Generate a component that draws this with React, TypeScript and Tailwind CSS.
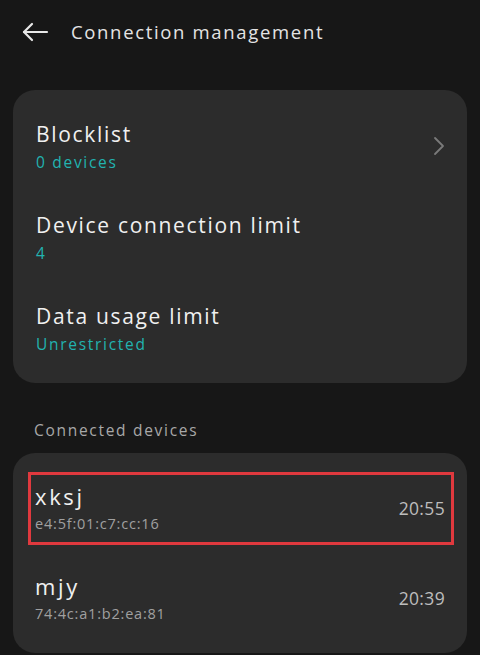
import React from 'react';

const font = { fontFamily: '"Open Sans", "Liberation Sans", sans-serif' };

const settings = [
  { title: 'Blocklist', value: '0 devices', chevron: true },
  { title: 'Device connection limit', value: '4', chevron: false },
  { title: 'Data usage limit', value: 'Unrestricted', chevron: false },
];

const devices = [
  { name: 'xksj', mac: 'e4:5f:01:c7:cc:16', time: '20:55', marked: true },
  { name: 'mjy', mac: '74:4c:a1:b2:ea:81', time: '20:39', marked: false },
];

export default function App() {
  return (
    <div className="w-[480px] h-[655px] overflow-hidden bg-[#171717] text-[#ececec]" style={font}>
      {/* header */}
      <div className="h-[64px] flex items-center pl-[21px]">
        <svg width="28" height="20" viewBox="0 0 28 20" fill="none" stroke="#e8e8e8" strokeWidth="2.2" strokeLinecap="round" strokeLinejoin="round">
          <path d="M26 10H3" />
          <path d="M11 2L3 10l8 8" />
        </svg>
        <h1 className="ml-[22px] text-[18.5px] tracking-[0.09em] text-[#e4e4e4]">Connection management</h1>
      </div>

      <div className="mx-[13px] mt-[26px] rounded-[22px] bg-[#2c2c2c] py-[10px]">
        {settings.map((s) => (
          <div key={s.title} className="h-[91px] flex items-center pl-[23px] pr-[22px]">
            <div className="flex-1">
              <div className="text-[21px] leading-[28px] tracking-[0.08em] text-[#f0f0f0]">{s.title}</div>
              <div className="mt-[4px] text-[15.5px] leading-[20px] tracking-[0.11em] text-[#22b3b0]">{s.value}</div>
            </div>
            {s.chevron && (
              <svg width="12" height="20" viewBox="0 0 12 20" fill="none" stroke="#7a7a7a" strokeWidth="1.8" strokeLinecap="round" strokeLinejoin="round">
                <path d="M2 2l8 8-8 8" />
              </svg>
            )}
          </div>
        ))}
      </div>

      <div className="pl-[34px] pt-[37px] pb-[13px] text-[15.5px] leading-[20px] tracking-[0.11em] text-[#a8a8a8]">Connected devices</div>

      <div className="mx-[13px] rounded-[22px] bg-[#2c2c2c] pt-[10px] pb-[10px]">
        {devices.map((d) => (
          <div key={d.mac} className="relative h-[90px] flex items-center pl-[22px] pr-[22px]">
            <div className="flex-1">
              <div className="text-[22px] leading-[28px] tracking-[0.12em] text-[#f0f0f0]">{d.name}</div>
              <div className="mt-[4px] text-[14.5px] leading-[20px] tracking-[0.055em] text-[#a0a0a0]">{d.mac}</div>
            </div>
            <div className="text-[17.5px] tracking-[0.02em] text-[#bdbdbd]">{d.time}</div>
            {d.marked && (
              <div className="absolute left-[15px] right-[13px] top-[9px] bottom-[8px] border-[3px] border-[#e0393e]" />
            )}
          </div>
        ))}
      </div>
    </div>
  );
}
